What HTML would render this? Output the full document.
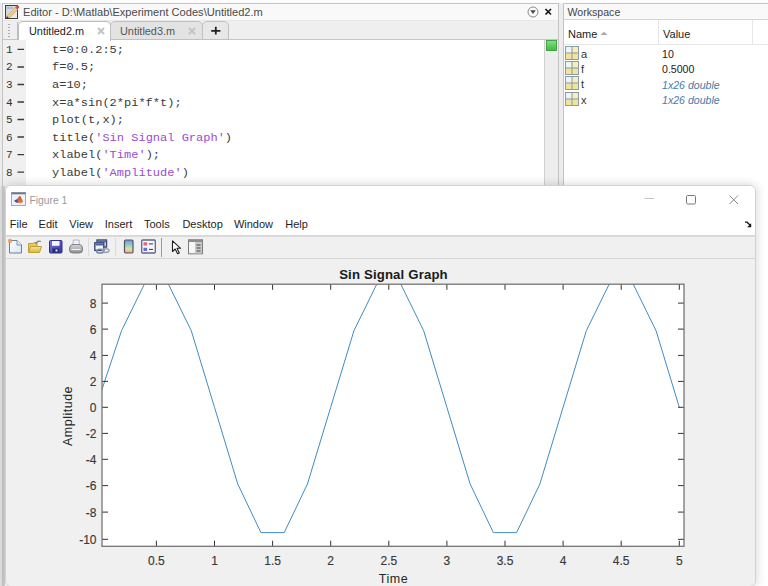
<!DOCTYPE html>
<html><head><meta charset="utf-8"><style>
*{margin:0;padding:0;box-sizing:border-box}
html,body{width:768px;height:586px;overflow:hidden;background:#ececec;font-family:"Liberation Sans",sans-serif}
.a{position:absolute;white-space:nowrap}
.m{font-family:"Liberation Mono",monospace;font-size:12px;line-height:12px;color:#3a3a3a;transform:scaleY(0.92);transform-origin:0 9.2px}
.s{color:#9a4ad6}
.ln{font-family:"Liberation Mono",monospace;font-size:11px;line-height:12px;color:#333;transform:scaleY(0.95);transform-origin:0 9.2px}
.tk{font-size:12px;line-height:12px;color:#383838;-webkit-text-stroke:0.15px #383838}
.mn{font-size:11px;line-height:12px;color:#1e1e1e}
</style></head><body>
<div class="a" style="left:0;top:0;width:768px;height:3px;background:#fdfdfd"></div>
<div class="a" style="left:2px;top:3px;width:557px;height:600px;background:#fff;border:1px solid #c4c4c4"></div>
<div class="a" style="left:3px;top:4px;width:555px;height:16px;background:#f9f9f9"></div>
<div class="a" style="left:3px;top:20px;width:555px;height:20px;background:#efefef;border-top:1px solid #e8e8e8;border-bottom:1px solid #c6c6c6"></div>
<svg class="a" style="left:4px;top:4px" width="16" height="16" viewBox="0 0 16 16">
<defs><linearGradient id="ei" x1="0" y1="0" x2="1" y2="1"><stop offset="0" stop-color="#c4ccd8"/><stop offset="1" stop-color="#eef2f8"/></linearGradient></defs>
<rect x="1.5" y="1.5" width="12" height="13" fill="url(#ei)" stroke="#3e3e3e" stroke-width="1"/>
<path d="M3 4 H9" stroke="#9aa4b4" stroke-width="1"/>
<path d="M2.8 12 L11.8 3 L14 5.2 L5 14.2 Z" fill="#eecb8a" stroke="#c89a58" stroke-width="0.6"/>
<path d="M11.2 3.6 L13 1.8 Q14 1.2 14.8 2 Q15.5 2.8 15 3.8 L13.4 5.4 Z" fill="#c8505e"/>
<path d="M2.8 12 L5 14.2 L2.2 14.8 Z" fill="#2a2a2a"/>
</svg>
<div class="a" style="left:23px;top:6px;font-size:11.1px;line-height:12px;color:#4a4a4a">Editor - D:\Matlab\Experiment Codes\Untitled2.m</div>
<svg class="a" style="left:527px;top:6px" width="28" height="12" viewBox="0 0 28 12">
<circle cx="6" cy="6" r="5" fill="#fafafa" stroke="#8a8a8a" stroke-width="1"/>
<path d="M3.2 4.3 L8.8 4.3 L6 8 Z" fill="#4a4a4a"/>
<path d="M18.5 3 L24 8.5 M24 3 L18.5 8.5" stroke="#111" stroke-width="1.6"/>
</svg>
<div class="a" style="left:4px;top:22px;width:14px;height:18px;border-right:1px solid #bdbdbd"></div>
<div class="a" style="left:8px;top:24px;width:2px;height:14px;background:repeating-linear-gradient(#aaa 0 1px,transparent 1px 3px)"></div>
<div class="a" style="left:18px;top:21px;width:93px;height:20px;background:#fff;border:1px solid #bcbcbc;border-bottom:none;border-radius:5px 5px 0 0"></div>
<div class="a" style="left:110px;top:21px;width:93px;height:19px;background:#e3e3e3;border:1px solid #c0c0c0;border-radius:5px 5px 0 0"></div>
<div class="a" style="left:202px;top:21px;width:27px;height:19px;background:#e8e8e8;border:1px solid #c0c0c0;border-radius:5px 5px 0 0"></div>
<div class="a" style="left:29px;top:25px;font-size:10.9px;line-height:12px;color:#222">Untitled2.m</div>
<div class="a" style="left:120px;top:25px;font-size:10.9px;line-height:12px;color:#555">Untitled3.m</div>
<svg class="a" style="left:96px;top:26px" width="10" height="10" viewBox="0 0 10 10"><path d="M2 2 L8 8 M8 2 L2 8" stroke="#c4c4c4" stroke-width="2.1"/></svg>
<svg class="a" style="left:187px;top:26px" width="10" height="10" viewBox="0 0 10 10"><path d="M2 2 L8 8 M8 2 L2 8" stroke="#c4c4c4" stroke-width="2.1"/></svg>
<svg class="a" style="left:209px;top:24px" width="13" height="13" viewBox="0 0 13 13"><path d="M6.8 2.8 V10.6 M2.2 6.8 H11.4" stroke="#222" stroke-width="1.8"/></svg>
<div class="a" style="left:3px;top:40px;width:23px;height:152px;background:#f0f0f0"></div>
<div class="a" style="left:544px;top:40px;width:14px;height:152px;background:#eeeeee;border-left:1px solid #d0d0d0"></div>
<div class="a" style="left:546px;top:40px;width:11px;height:11px;background:linear-gradient(#7ee07e,#3fbf3f);border:1px solid #4aa04a"></div>
<svg class="a" style="left:0;top:0" width="30" height="190"><path d="M17.5 49.40 H24 M17.5 66.93 H24 M17.5 84.46 H24 M17.5 101.99 H24 M17.5 119.52 H24 M17.5 137.05 H24 M17.5 154.58 H24 M17.5 172.11 H24" stroke="#3a3a3a" stroke-width="1.4"/></svg>
<div class="a ln" style="left:6px;top:43.9px">1</div>
<div class="a m" style="left:52px;top:43.9px">t=0:0.2:5;</div>
<div class="a ln" style="left:6px;top:61.4px">2</div>
<div class="a m" style="left:52px;top:61.4px">f=0.5;</div>
<div class="a ln" style="left:6px;top:79.0px">3</div>
<div class="a m" style="left:52px;top:79.0px">a=10;</div>
<div class="a ln" style="left:6px;top:96.5px">4</div>
<div class="a m" style="left:52px;top:96.5px">x=a*sin(2*pi*f*t);</div>
<div class="a ln" style="left:6px;top:114.0px">5</div>
<div class="a m" style="left:52px;top:114.0px">plot(t,x);</div>
<div class="a ln" style="left:6px;top:131.6px">6</div>
<div class="a m" style="left:52px;top:131.6px">title(<span class=s>'Sin Signal Graph'</span>)</div>
<div class="a ln" style="left:6px;top:149.1px">7</div>
<div class="a m" style="left:52px;top:149.1px">xlabel(<span class=s>'Time'</span>);</div>
<div class="a ln" style="left:6px;top:166.6px">8</div>
<div class="a m" style="left:52px;top:166.6px">ylabel(<span class=s>'Amplitude'</span>)</div>
<div class="a" style="left:563px;top:3px;width:206px;height:600px;background:#fff;border:1px solid #c4c4c4"></div>
<div class="a" style="left:564px;top:4px;width:204px;height:16px;background:#f9f9f9;border-bottom:1px solid #d4d4d4"></div>
<div class="a" style="left:567.5px;top:6px;font-size:10.6px;line-height:12px;color:#444">Workspace</div>
<div class="a" style="left:564px;top:44px;width:204px;height:1px;background:#e6e6e6"></div>
<div class="a" style="left:658px;top:20px;width:1px;height:24px;background:#e6e6e6"></div>
<div class="a" style="left:752px;top:20px;width:1px;height:24px;background:#e6e6e6"></div>
<div class="a" style="left:568px;top:28px;font-size:11px;line-height:12px;color:#222">Name</div>
<svg class="a" style="left:600px;top:31px" width="8" height="5" viewBox="0 0 8 5"><path d="M0.5 4 L4 0.8 L7.5 4 Z" fill="#aaa"/></svg>
<div class="a" style="left:663px;top:28px;font-size:11px;line-height:12px;color:#222">Value</div>
<svg class="a" style="left:564.5px;top:45.5px" width="14" height="14" viewBox="0 0 14 14">
<rect x="0.5" y="0.5" width="13" height="13" fill="#f2e49a" stroke="#8a9aa6" stroke-width="1"/>
<rect x="1" y="1" width="6" height="6" fill="#eef4fc"/>
<rect x="7.5" y="1" width="5.5" height="5.5" fill="#f6eebc"/>
<path d="M7 0.5 V13.5 M0.5 7 H13.5" stroke="#8a9aa6" stroke-width="1"/>
</svg>
<div class="a" style="left:581px;top:47.5px;font-size:11px;line-height:12px;color:#333">a</div>
<div class="a" style="left:662px;top:48.0px;line-height:12px;color:#222;font-size:10.6px">10</div>
<svg class="a" style="left:564.5px;top:60.9px" width="14" height="14" viewBox="0 0 14 14">
<rect x="0.5" y="0.5" width="13" height="13" fill="#f2e49a" stroke="#8a9aa6" stroke-width="1"/>
<rect x="1" y="1" width="6" height="6" fill="#eef4fc"/>
<rect x="7.5" y="1" width="5.5" height="5.5" fill="#f6eebc"/>
<path d="M7 0.5 V13.5 M0.5 7 H13.5" stroke="#8a9aa6" stroke-width="1"/>
</svg>
<div class="a" style="left:581px;top:62.9px;font-size:11px;line-height:12px;color:#333">f</div>
<div class="a" style="left:662px;top:63.4px;line-height:12px;color:#222;font-size:10.6px">0.5000</div>
<svg class="a" style="left:564.5px;top:76.3px" width="14" height="14" viewBox="0 0 14 14">
<rect x="0.5" y="0.5" width="13" height="13" fill="#f2e49a" stroke="#8a9aa6" stroke-width="1"/>
<rect x="1" y="1" width="6" height="6" fill="#eef4fc"/>
<rect x="7.5" y="1" width="5.5" height="5.5" fill="#f6eebc"/>
<path d="M7 0.5 V13.5 M0.5 7 H13.5" stroke="#8a9aa6" stroke-width="1"/>
</svg>
<div class="a" style="left:581px;top:78.3px;font-size:11px;line-height:12px;color:#333">t</div>
<div class="a" style="left:662px;top:78.8px;line-height:12px;font-style:italic;color:#4a78a8;font-size:10.6px">1x26 double</div>
<svg class="a" style="left:564.5px;top:91.7px" width="14" height="14" viewBox="0 0 14 14">
<rect x="0.5" y="0.5" width="13" height="13" fill="#f2e49a" stroke="#8a9aa6" stroke-width="1"/>
<rect x="1" y="1" width="6" height="6" fill="#eef4fc"/>
<rect x="7.5" y="1" width="5.5" height="5.5" fill="#f6eebc"/>
<path d="M7 0.5 V13.5 M0.5 7 H13.5" stroke="#8a9aa6" stroke-width="1"/>
</svg>
<div class="a" style="left:581px;top:93.7px;font-size:11px;line-height:12px;color:#333">x</div>
<div class="a" style="left:662px;top:94.2px;line-height:12px;font-style:italic;color:#4a78a8;font-size:10.6px">1x26 double</div>
<div class="a" style="left:0;top:186px;width:2px;height:400px;background:#e2e2e2"></div>
<div class="a" style="left:2px;top:186px;width:3px;height:400px;background:linear-gradient(90deg,#c4c4c4,#d8d8d8)"></div>
<div class="a" style="left:5px;top:185px;width:751px;height:402px;border-radius:6px;box-shadow:0 0 10px 1px rgba(0,0,0,0.15)"></div>
<div class="a" style="left:5px;top:185px;width:751px;height:402px;background:#f0f0f0;border:1px solid #d2d2d2;border-radius:6px;overflow:hidden"><div class="a" style="left:0;top:0;width:751px;height:50px;background:#fff;border-bottom:1px solid #d9d9d9"></div></div>
<svg class="a" style="left:11px;top:192px" width="15" height="14" viewBox="0 0 15 14">
<defs><linearGradient id="ml" x1="0" y1="0" x2="0" y2="1"><stop offset="0" stop-color="#d84a20"/><stop offset="0.7" stop-color="#e8702a"/><stop offset="1" stop-color="#f0b060"/></linearGradient></defs>
<rect x="0.5" y="0.5" width="14" height="13" fill="#eef1f8" stroke="#a2aab6" stroke-width="1"/>
<rect x="0.5" y="0.5" width="14" height="1.8" fill="#6e7884"/>
<path d="M6.5 10.5 L8 4.5 Q8.8 3.3 9.6 4.5 L12.2 9.8 L9.5 11.8 Z" fill="url(#ml)"/>
<path d="M3 8.8 L6.2 7 L7.2 10.8 L5 10.5 Z" fill="#3a4ea8"/>
<path d="M6.2 7 L8 4.5 L6.8 10.6 Z" fill="#a83a50"/>
</svg>
<div class="a" style="left:29.5px;top:195px;font-size:10.3px;line-height:12px;color:#9a9a9a">Figure 1</div>
<svg class="a" style="left:640px;top:192px" width="110" height="16" viewBox="0 0 110 16">
<path d="M4.5 6.5 H14" stroke="#c4c4c4" stroke-width="1"/>
<rect x="46.5" y="3.5" width="9" height="8.5" rx="1.2" fill="none" stroke="#7a7a7a" stroke-width="1"/>
<path d="M89.5 3.5 L98 12 M98 3.5 L89.5 12" stroke="#8a8a8a" stroke-width="1"/>
</svg>
<div class="a mn" style="left:9.8px;top:218px">File</div>
<div class="a mn" style="left:38.6px;top:218px">Edit</div>
<div class="a mn" style="left:69.3px;top:218px">View</div>
<div class="a mn" style="left:104.8px;top:218px">Insert</div>
<div class="a mn" style="left:144px;top:218px">Tools</div>
<div class="a mn" style="left:182.4px;top:218px">Desktop</div>
<div class="a mn" style="left:233.9px;top:218px">Window</div>
<div class="a mn" style="left:285.3px;top:218px">Help</div>
<svg class="a" style="left:744px;top:221px" width="9" height="7" viewBox="0 0 9 7"><path d="M1 1.2 L3 1.2 L6 4" stroke="#111" stroke-width="1.3" fill="none"/><path d="M7.2 2.2 L7.2 6.2 L3.2 6.2 Z" fill="#111"/></svg>
<div class="a" style="left:6px;top:236px;width:749px;height:23px;background:#f0f0f0;border-top:1px solid #dadada;border-bottom:1px solid #d6d6d6"></div>
<svg class="a" style="left:0;top:236px" width="210" height="22" viewBox="0 236 210 22">
<defs>
<linearGradient id="nd" x1="0" y1="0" x2="1" y2="1"><stop offset="0" stop-color="#ffffff"/><stop offset="1" stop-color="#d4e6f6"/></linearGradient>
<linearGradient id="fl" x1="0" y1="0" x2="0" y2="1"><stop offset="0" stop-color="#f6e58a"/><stop offset="1" stop-color="#d9b840"/></linearGradient>
<linearGradient id="sv" x1="0" y1="0" x2="1" y2="1"><stop offset="0" stop-color="#7a7ad8"/><stop offset="1" stop-color="#34349a"/></linearGradient>
<linearGradient id="pr" x1="0" y1="0" x2="0" y2="1"><stop offset="0" stop-color="#d8d8d8"/><stop offset="1" stop-color="#8a8a8a"/></linearGradient>
<linearGradient id="cb" x1="0" y1="0" x2="0" y2="1"><stop offset="0" stop-color="#7f8fe0"/><stop offset="0.45" stop-color="#8ed8d0"/><stop offset="0.7" stop-color="#e8e088"/><stop offset="1" stop-color="#f498a8"/></linearGradient>
</defs>
<path d="M9.5 240.5 H17 L21.5 245 V253 H9.5 Z" fill="url(#nd)" stroke="#6f7f94" stroke-width="1"/>
<path d="M17 240.5 V245 H21.5" fill="#e4eef8" stroke="#6f7f94" stroke-width="0.8"/>
<circle cx="10" cy="241" r="2.2" fill="#f29a5a" opacity="0.9"/>
<path d="M28.5 243.5 H33 L34.5 242.5 H37 V252.5 H28.5 Z" fill="#e8cc58" stroke="#bda03a" stroke-width="1"/>
<path d="M28.5 252.5 L30.5 246.5 H41.5 L39.5 252.5 Z" fill="url(#fl)" stroke="#bda03a" stroke-width="1"/>
<path d="M35.5 244 Q37.5 240 41 241.5" fill="none" stroke="#7a8496" stroke-width="1.3"/>
<rect x="49.5" y="240.5" width="12.5" height="12.5" rx="1" fill="url(#sv)" stroke="#2e3090" stroke-width="1"/>
<rect x="52" y="241" width="7.5" height="4.8" fill="#f4f4ff"/>
<rect x="52.5" y="248.5" width="6.5" height="4" fill="#262a6a"/>
<rect x="55.5" y="249.5" width="2" height="2" fill="#e8e8ff"/>
<path d="M72.5 246 L73.5 240 H79 L79.5 246 Z" fill="#eef2fa" stroke="#a0a6b0" stroke-width="0.8"/>
<path d="M69.5 248 Q70 244.5 73 244.5 H79 Q82.5 244.5 82.5 248 V250.5 Q82.5 253 79 253 H73 Q69.5 253 69.5 250.5 Z" fill="url(#pr)" stroke="#7a7a7a" stroke-width="0.9"/>
<path d="M71.5 249.5 H80.5" stroke="#f0f0f0" stroke-width="1.2"/>
<path d="M88.5 238 V256" stroke="#dcdcdc" stroke-width="1"/>
<rect x="97" y="240" width="9.5" height="7" fill="#e4eaf2" stroke="#3c4872" stroke-width="1.4"/>
<rect x="97.5" y="240.5" width="8.5" height="1.8" fill="#5a68a8"/>
<rect x="94.8" y="242.8" width="9" height="7.6" fill="#eef3f6" stroke="#3c4872" stroke-width="1.4"/>
<rect x="95.5" y="243.5" width="7.6" height="2" fill="#4e5ea6"/>
<ellipse cx="100.2" cy="251.2" rx="3.6" ry="1.9" fill="none" stroke="#7c889c" stroke-width="1.5"/>
<ellipse cx="105.6" cy="250.6" rx="3.4" ry="1.9" fill="none" stroke="#9aa4b4" stroke-width="1.5"/>
<path d="M115.5 238 V256" stroke="#dcdcdc" stroke-width="1"/>
<rect x="124.5" y="240" width="8.5" height="13" rx="1.2" fill="url(#cb)" stroke="#505560" stroke-width="1.2"/>
<rect x="141.7" y="240" width="13.6" height="13" rx="1" fill="#f6f6fa" stroke="#5a6890" stroke-width="1.3"/>
<rect x="143.5" y="242.3" width="3.6" height="3.2" fill="#e06868"/>
<rect x="143.5" y="247.8" width="3.6" height="3.2" fill="#6a6ae0"/>
<path d="M149 243.9 H153 M149 249.4 H153" stroke="#333" stroke-width="1"/>
<path d="M161.5 238 V257" stroke="#9a9a9a" stroke-width="1"/>
<path d="M172.5 240.8 V251.5 L175.2 249 L177.6 253.8 L179.3 253 L177 248.3 L180.6 248.3 Z" fill="#fff" stroke="#1e1e1e" stroke-width="1.1" stroke-linejoin="round"/>
<rect x="188.5" y="239.8" width="14" height="14" fill="#f6f6f6" stroke="#7a7a7a" stroke-width="1"/>
<rect x="188.5" y="239.8" width="14" height="2.2" fill="#8a8e94"/>
<rect x="195" y="242" width="7" height="11.3" fill="#c8c8c8"/>
<path d="M196.5 245 H200.5 M196.5 248 H200.5 M196.5 251 H200.5" stroke="#444" stroke-width="1.2"/>
</svg>
<svg class="a" style="left:0;top:0" width="768" height="586" viewBox="0 0 768 586"><rect x="102" y="284.2" width="582" height="262.09999999999997" fill="#fff"/><clipPath id="c"><rect x="102" y="284.2" width="582" height="262.09999999999997"/></clipPath><polyline clip-path="url(#c)" fill="none" stroke="#3f8cbf" stroke-width="1" stroke-linejoin="round" points="98.30,400.50 121.54,330.70 144.78,283.37 168.02,283.37 191.26,330.70 214.50,407.30 237.74,483.99 260.98,532.64 284.22,532.64 307.46,483.99 330.70,407.30 353.94,330.70 377.18,283.37 400.42,283.37 423.66,330.70 446.90,407.30 470.14,483.99 493.38,532.64 516.62,532.64 539.86,483.99 563.10,407.30 586.34,330.70 609.58,283.37 632.82,283.37 656.06,330.70 679.30,407.30"/><path d="M156.4 546.3 V540.7 M156.4 284.2 V289.8 M214.5 546.3 V540.7 M214.5 284.2 V289.8 M272.6 546.3 V540.7 M272.6 284.2 V289.8 M330.7 546.3 V540.7 M330.7 284.2 V289.8 M388.8 546.3 V540.7 M388.8 284.2 V289.8 M446.9 546.3 V540.7 M446.9 284.2 V289.8 M505.0 546.3 V540.7 M505.0 284.2 V289.8 M563.1 546.3 V540.7 M563.1 284.2 V289.8 M621.2 546.3 V540.7 M621.2 284.2 V289.8 M679.3 546.3 V540.7 M679.3 284.2 V289.8 M102 303.1 H108 M684 303.1 H678 M102 329.1 H108 M684 329.1 H678 M102 355.4 H108 M684 355.4 H678 M102 381.4 H108 M684 381.4 H678 M102 407.3 H108 M684 407.3 H678 M102 433.4 H108 M684 433.4 H678 M102 459.3 H108 M684 459.3 H678 M102 485.6 H108 M684 485.6 H678 M102 512.1 H108 M684 512.1 H678 M102 539.3 H108 M684 539.3 H678" stroke="#333" stroke-width="1" fill="none"/><rect x="102" y="284.2" width="582" height="262.09999999999997" fill="none" stroke="#707070" stroke-width="1.25"/></svg>
<div class="a tk" style="left:116.4px;width:80px;text-align:center;top:554.7px">0.5</div>
<div class="a tk" style="left:174.5px;width:80px;text-align:center;top:554.7px">1</div>
<div class="a tk" style="left:232.6px;width:80px;text-align:center;top:554.7px">1.5</div>
<div class="a tk" style="left:290.7px;width:80px;text-align:center;top:554.7px">2</div>
<div class="a tk" style="left:348.8px;width:80px;text-align:center;top:554.7px">2.5</div>
<div class="a tk" style="left:406.9px;width:80px;text-align:center;top:554.7px">3</div>
<div class="a tk" style="left:465.0px;width:80px;text-align:center;top:554.7px">3.5</div>
<div class="a tk" style="left:523.1px;width:80px;text-align:center;top:554.7px">4</div>
<div class="a tk" style="left:581.2px;width:80px;text-align:center;top:554.7px">4.5</div>
<div class="a tk" style="left:639.3px;width:80px;text-align:center;top:554.7px">5</div>
<div class="a tk" style="left:16.5px;width:80px;text-align:right;top:297.8px">8</div>
<div class="a tk" style="left:16.5px;width:80px;text-align:right;top:323.8px">6</div>
<div class="a tk" style="left:16.5px;width:80px;text-align:right;top:350.1px">4</div>
<div class="a tk" style="left:16.5px;width:80px;text-align:right;top:376.1px">2</div>
<div class="a tk" style="left:16.5px;width:80px;text-align:right;top:402.0px">0</div>
<div class="a tk" style="left:16.5px;width:80px;text-align:right;top:428.1px">-2</div>
<div class="a tk" style="left:16.5px;width:80px;text-align:right;top:454.0px">-4</div>
<div class="a tk" style="left:16.5px;width:80px;text-align:right;top:480.3px">-6</div>
<div class="a tk" style="left:16.5px;width:80px;text-align:right;top:506.8px">-8</div>
<div class="a tk" style="left:16.5px;width:80px;text-align:right;top:534.0px">-10</div>
<div class="a" style="left:293.5px;width:200px;text-align:center;top:269px;font-size:13.2px;line-height:12px;font-weight:bold;color:#1a1a1a;letter-spacing:0.15px">Sin Signal Graph</div>
<div class="a" style="left:293.5px;width:200px;text-align:center;top:573px;font-size:12.5px;line-height:12px;color:#262626;letter-spacing:0.5px">Time</div>
<div class="a" style="left:-32px;width:200px;text-align:center;top:410px;font-size:12.5px;line-height:12px;color:#262626;letter-spacing:0.5px;transform:rotate(-90deg)">Amplitude</div>
</body></html>
